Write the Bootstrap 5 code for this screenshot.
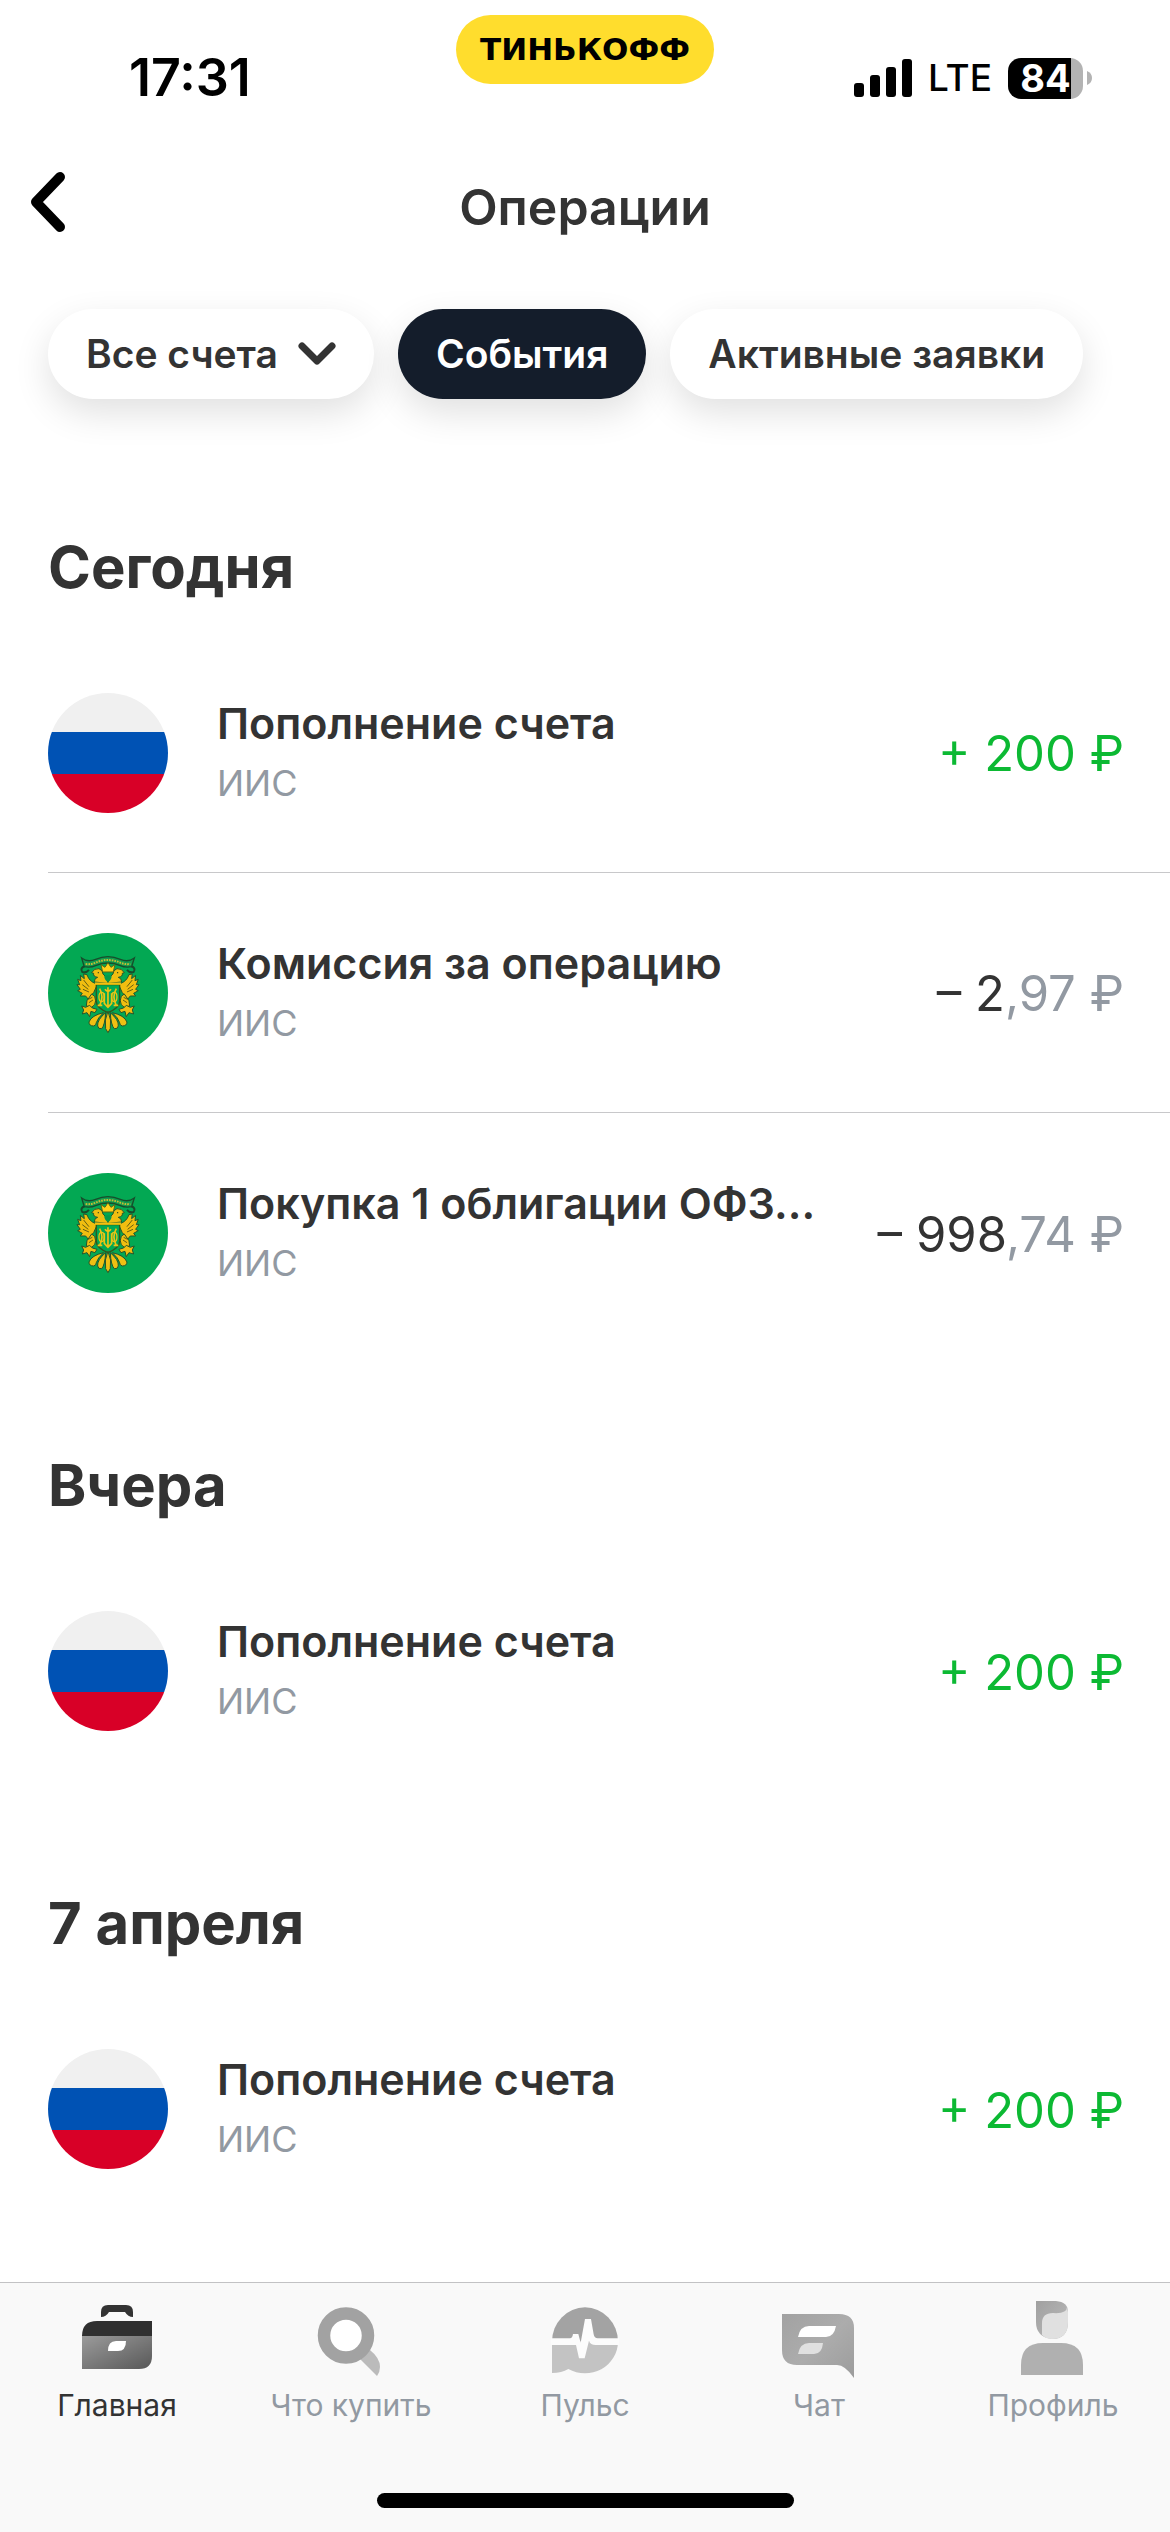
<!DOCTYPE html>
<html lang="ru">
<head>
<meta charset="utf-8">
<meta name="viewport" content="width=device-width, initial-scale=1">
<title>Операции</title>
<link href="https://cdn.jsdelivr.net/npm/bootstrap@5.3.0/dist/css/bootstrap.min.css" rel="stylesheet">
<style>
  body { font-family: Inter, "Noto Sans", sans-serif; color: #333; background: #fff; }
  svg { display: block; flex: none; }
  .status-bar { height: 156px; color: #000; }
  .clock { font-size: 52px; line-height: 60px; font-weight: 600; margin: 48px 0 0 129px; }
  .brand-pill { height: 69px; margin-top: 15px; padding: 0 24px; border-radius: 35px; background: #ffdd2d;
    font: 700 31px/69px "DejaVu Sans", sans-serif; }
  .indicators { margin: 57px 78px 0 0; gap: 16px; height: 42px; }
  .lte { font-size: 37px; line-height: 42px; font-weight: 500; }
  .battery { width: 75px; height: 41px; border-radius: 13px; color: #fff; font-size: 38px; font-weight: 700; line-height: 41px;
    background: linear-gradient(90deg, #000 84%, #b3b3b3 84%); }
  .title-bar { height: 102px; }
  .title-bar h1 { font-size: 50px; line-height: 102px; font-weight: 600; }
  .back { width: 96px; padding: 15px 0 0 30px; }
  .filters { padding: 51px 48px 0; gap: 24px; }
  .chip { --bs-btn-font-size: 39px; --bs-btn-font-weight: 600; --bs-btn-line-height: 90px; --bs-btn-padding-y: 0; --bs-btn-padding-x: 38px;
    --bs-btn-border-width: 0; --bs-btn-color: #333; --bs-btn-bg: #fff; --bs-btn-hover-bg: #f6f7f8;
    --bs-btn-active-bg: #141d2b; --bs-btn-active-color: #fff;
    height: 90px; gap: 20px; box-shadow: 0 14px 36px rgba(0, 0, 0, .12); white-space: nowrap; }
  .feed { padding-top: 36px; }
  .day { font-size: 58px; line-height: 72px; font-weight: 700; padding: 96px 48px 30px; }
  .feed .list-group-item { height: 240px; margin-left: 48px; padding: 0 46px 0 0; gap: 49px; color: #333; border-color: #c8c8ca; }
  .op-name { font-size: 43px; line-height: 60px; font-weight: 600; }
  .op-account { font-size: 36px; line-height: 60px; color: #9299a2; }
  .sum { font-size: 49px; line-height: 60px; padding-top: 3px; white-space: nowrap; }
  .gain { color: #0cb933; }
  .cents { color: #9299a2; }
  .tab-bar { background: #f9f9f9; border-top: 1px solid #c2c2c4; height: 250px; padding-top: 13px; }
  .tab-bar .nav-link { padding: 0; font-size: 30px; line-height: 36px; color: #9299a2; white-space: nowrap; }
  .tab-bar .nav-link.active { color: #333; }
  .tab-bar svg { margin-bottom: 7px; }
  .home-line { width: 417px; height: 15px; border-radius: 8px; background: #000; margin-bottom: 24px; }
</style>
<script src="https://cdn.jsdelivr.net/npm/bootstrap@5.3.0/dist/js/bootstrap.bundle.min.js"></script>
</head>
<body>
<svg width="0" height="0" class="position-absolute" aria-hidden="true">
  <defs>
    <linearGradient id="caseFill" x1="0" y1="0" x2="1" y2="1"><stop offset="0" stop-color="#9b9b9b"/><stop offset="1" stop-color="#585858"/></linearGradient>
    <linearGradient id="chatFill" x1="0" y1="0" x2="1" y2="1"><stop offset="0" stop-color="#a2a2a2"/><stop offset=".5" stop-color="#acacac"/><stop offset="1" stop-color="#9c9c9c"/></linearGradient>
    <linearGradient id="hairFill" x1="0" y1="0" x2="1" y2="1"><stop offset="0" stop-color="#a0a0a0"/><stop offset="1" stop-color="#bbb"/></linearGradient>
    <clipPath id="disc"><circle cx="60" cy="60" r="60"/></clipPath>
    <symbol id="flag" viewBox="0 0 120 120">
      <g clip-path="url(#disc)"><path fill="#f0f0f0" d="M0 0h120v39H0z"/><path fill="#0052b4" d="M0 39h120v42H0z"/><path fill="#d80027" d="M0 81h120v39H0z"/></g>
    </symbol>
    <g id="eagleSide" fill="#f0be10" stroke="#24532b" stroke-width="3">
      <path d="M88 102C76 100 62 92 56 74L46 72 48 86 36 76 38 92 28 88 34 104 26 104 36 118 28 122 42 130 36 138 52 138 62 150 68 136 76 128z"/>
      <path d="M78 96q0-12 10-14-14-2-12-12l-6-2q8-14 22-12 12 4 12 16l14 14v14z"/>
      <path d="M70 132q12 4 12 20 0 14-12 20l-16-4 2-16z"/>
      <path d="M40 168l12 4 12-6 8 8 14 4-6 10-12-4-4 16-8-12-14 4 4-12z"/>
      <path d="M46 90l16 20M42 104l18 14M44 118l18 8M62 158l12-8M60 148l12-6" fill="none" stroke="#625f12"/>
      <circle cx="90" cy="68" r="2" fill="#173f22" stroke="none"/>
    </g>
    <symbol id="crest" viewBox="0 0 120 120">
      <circle cx="60" cy="60" r="60" fill="#03a853"/>
      <g transform="translate(20.300 17) scale(.3333)">
        <path d="M50 48q-16 6-8 18 12 4 20-6M188 48q16 6 8 18-12 4-20-6" fill="none" stroke="#174d2b" stroke-width="6"/>
        <path d="M40 24q18 14 42 4 37-16 74 0 24 10 42-4l-8 26q-18 4-36-4-35-14-70 0-18 8-36 4z" fill="#109a4e" stroke="#174d2b" stroke-width="4"/>
        <path d="M52 42q18 2 32-5 35-14 70 0 14 7 32 5" fill="none" stroke="#c4bd34" stroke-width="6" stroke-dasharray="5 3"/>
        <use href="#eagleSide"/>
        <use href="#eagleSide" transform="matrix(-1 0 0 1 238 0)"/>
        <path d="M103 66l-5-22 12 8 9-14 9 14 12-8-5 22z" fill="#ffd11a" stroke="#5b6813" stroke-width="3"/>
        <path d="M108 78q11-5 22 0 0 12-11 18-11-6-11-18z" fill="#08984a"/>
        <path d="M84 104h70v50q0 20-35 34-35-14-35-34z" fill="#03a853" stroke="#31561b" stroke-width="4"/>
        <path d="M80 101h78" stroke="#f2c10f" stroke-width="7"/>
        <path d="M119 112v62M110 118q9 12 18 0M94 116q14 24 0 50M144 116q-14 24 0 50M88 166h14M136 166h14M108 130v30l11 12 11-12v-30" stroke="#edc315" stroke-width="5" fill="none"/>
        <ellipse cx="100" cy="141" rx="8" ry="14" fill="none" stroke="#edc315" stroke-width="4"/>
        <ellipse cx="138" cy="141" rx="8" ry="14" fill="none" stroke="#edc315" stroke-width="4"/>
        <g fill="#efc013" stroke="#24532b" stroke-width="3">
          <path d="M119 184q-12 26-7 52l7 12 7-12q5-26-7-52z"/>
          <path d="M112 188q-26 22-24 40 2 10 12 8 10-10 12-48z"/>
          <path d="M106 188q-36 8-44 28 0 12 14 12 8-2 8-10 4-14 22-30z"/>
          <path d="M126 188q26 22 24 40-2 10-12 8-10-10-12-48z"/>
          <path d="M132 188q36 8 44 28 0 12-14 12-8-2-8-10-4-14-22-30z"/>
        </g>
      </g>
    </symbol>
  </defs>
</svg>

<div class="d-flex flex-column min-vh-100">
  <header>
    <div class="status-bar row g-0">
      <div class="col"><div class="clock">17:31</div></div>
      <div class="col-auto"><div class="brand-pill">ТИНЬКОФФ</div></div>
      <div class="col"><div class="d-flex justify-content-end align-items-center indicators">
        <svg width="58" height="38" viewBox="0 0 58 38" aria-label="Сигнал"><rect y="24" width="10" height="14" rx="3"/><rect x="16" y="16" width="10" height="22" rx="3"/><rect x="32" y="8" width="10" height="30" rx="3"/><rect x="48" width="10" height="38" rx="3"/></svg>
        <span class="lte">LTE</span>
        <div class="d-flex align-items-center gap-1">
          <div class="battery text-center">84</div>
          <svg width="5" height="14" viewBox="0 0 5 14"><path d="M0 0q5 2 5 7t-5 7z" fill="#b3b3b3"/></svg>
        </div>
      </div></div>
    </div>
    <div class="title-bar row g-0">
      <div class="col"><button type="button" class="btn border-0 back" aria-label="Назад"><svg width="35" height="62" viewBox="0 0 35 62"><path d="M30 6 6 31l24 25" fill="none" stroke="#000" stroke-width="10" stroke-linecap="round" stroke-linejoin="round"/></svg></button></div>
      <h1 class="col-auto m-0">Операции</h1>
      <div class="col"></div>
    </div>
    <div class="filters d-flex">
      <button type="button" class="btn chip rounded-pill d-flex align-items-center">Все счета
        <svg width="38" height="24" viewBox="0 0 38 24"><path d="M4 4l15 15L34 4" fill="none" stroke="#333" stroke-width="7" stroke-linecap="round" stroke-linejoin="round"/></svg>
      </button>
      <button type="button" class="btn chip rounded-pill active" aria-pressed="true">События</button>
      <button type="button" class="btn chip rounded-pill">Активные заявки</button>
    </div>
  </header>

  <main class="feed flex-grow-1">
    <section>
      <h2 class="day m-0">Сегодня</h2>
      <div class="list-group list-group-flush">
        <div class="list-group-item d-flex align-items-center">
          <svg width="120" height="120"><use href="#flag"/></svg>
          <div class="flex-grow-1 text-truncate"><div class="op-name text-truncate">Пополнение счета</div><div class="op-account">ИИС</div></div>
          <div class="sum gain">+ 200 ₽</div>
        </div>
        <div class="list-group-item d-flex align-items-center">
          <svg width="120" height="120"><use href="#crest"/></svg>
          <div class="flex-grow-1 text-truncate"><div class="op-name text-truncate">Комиссия за операцию</div><div class="op-account">ИИС</div></div>
          <div class="sum">– 2<span class="cents">,97 ₽</span></div>
        </div>
        <div class="list-group-item d-flex align-items-center">
          <svg width="120" height="120"><use href="#crest"/></svg>
          <div class="flex-grow-1 text-truncate"><div class="op-name text-truncate">Покупка 1 облигации ОФЗ...</div><div class="op-account">ИИС</div></div>
          <div class="sum">– 998<span class="cents">,74 ₽</span></div>
        </div>
      </div>
    </section>
    <section>
      <h2 class="day m-0">Вчера</h2>
      <div class="list-group list-group-flush">
        <div class="list-group-item d-flex align-items-center">
          <svg width="120" height="120"><use href="#flag"/></svg>
          <div class="flex-grow-1 text-truncate"><div class="op-name text-truncate">Пополнение счета</div><div class="op-account">ИИС</div></div>
          <div class="sum gain">+ 200 ₽</div>
        </div>
      </div>
    </section>
    <section>
      <h2 class="day m-0">7 апреля</h2>
      <div class="list-group list-group-flush">
        <div class="list-group-item d-flex align-items-center">
          <svg width="120" height="120"><use href="#flag"/></svg>
          <div class="flex-grow-1 text-truncate"><div class="op-name text-truncate">Пополнение счета</div><div class="op-account">ИИС</div></div>
          <div class="sum gain">+ 200 ₽</div>
        </div>
      </div>
    </section>
  </main>

  <footer class="tab-bar sticky-bottom d-flex flex-column justify-content-between">
    <nav class="nav nav-justified flex-nowrap">
      <a href="#" class="nav-link active col d-flex flex-column align-items-center" aria-current="page">
        <svg width="84" height="84" viewBox="0 0 84 84"><path d="M26 21v-5q0-7 7-7h18q7 0 7 7v5q-5 0-8-5H34q-3 5-8 5z" fill="#333"/><path d="M7 40q0-15 15-15h55v15z" fill="#303030"/><path d="M7 40h70v20q0 13-13 13H7z" fill="url(#caseFill)"/><path d="M33 55q0-10 8-10h10q0 10-8 10z" fill="#fff"/></svg>
        Главная</a>
      <a href="#" class="nav-link col d-flex flex-column align-items-center">
        <svg width="84" height="84" viewBox="0 0 84 84"><path d="M51 63 61 54q10 8 10 17 0 5-3 9z" fill="#bbb"/><circle cx="37" cy="39.500" r="22" fill="#fff" stroke="#a2a2a2" stroke-width="12.500"/></svg>
        Что купить</a>
      <a href="#" class="nav-link col d-flex flex-column align-items-center">
        <svg width="84" height="84" viewBox="0 0 84 84"><g transform="translate(2 -6) scale(.3333)"><path d="M21 155a99 103 0 0 1 198 0z" fill="#a3a3a3"/><path d="M21 155h198a99 96 0 0 1-149 82q-20 12-49 12z" fill="#c3c3c3"/><path d="M18 145h57q7 0 9-13h16l7 26 13-71h18l8 46q2 12 12 12h64v20h-70q-16 0-20-13l-13 53h-17l-9-40H18z" fill="#fcfcfc"/></g></svg>
        Пульс</a>
      <a href="#" class="nav-link col d-flex flex-column align-items-center">
        <svg width="84" height="84" viewBox="0 0 84 84"><path d="M5 18h57q15 0 15 14v50q-9-13-17-13H20Q5 69 5 54z" fill="url(#chatFill)"/><path d="M21 41q2-11 11-11h27q-2 11-10 11z" fill="#fff"/><path d="M21 58q2-11 11-11h14q-1 11-9 11z" fill="#e0e0e0"/></svg>
        Чат</a>
      <a href="#" class="nav-link col d-flex flex-column align-items-center">
        <svg width="84" height="84" viewBox="0 0 84 84"><path d="M25 5h20q12 1 12 11v10q0 17-16 17-16-2-16-17z" fill="url(#hairFill)"/><path d="M31 41V27q0-10 11-10 14 1 14-6l1 5v10q0 17-16 17-6 0-10-4z" fill="#e0e0e0"/><path d="M10 79V69q0-22 22-22h18q22 0 22 22v10z" fill="#b0b0b0"/></svg>
        Профиль</a>
    </nav>
    <div class="home-line align-self-center"></div>
  </footer>
</div>
</body>
</html>
